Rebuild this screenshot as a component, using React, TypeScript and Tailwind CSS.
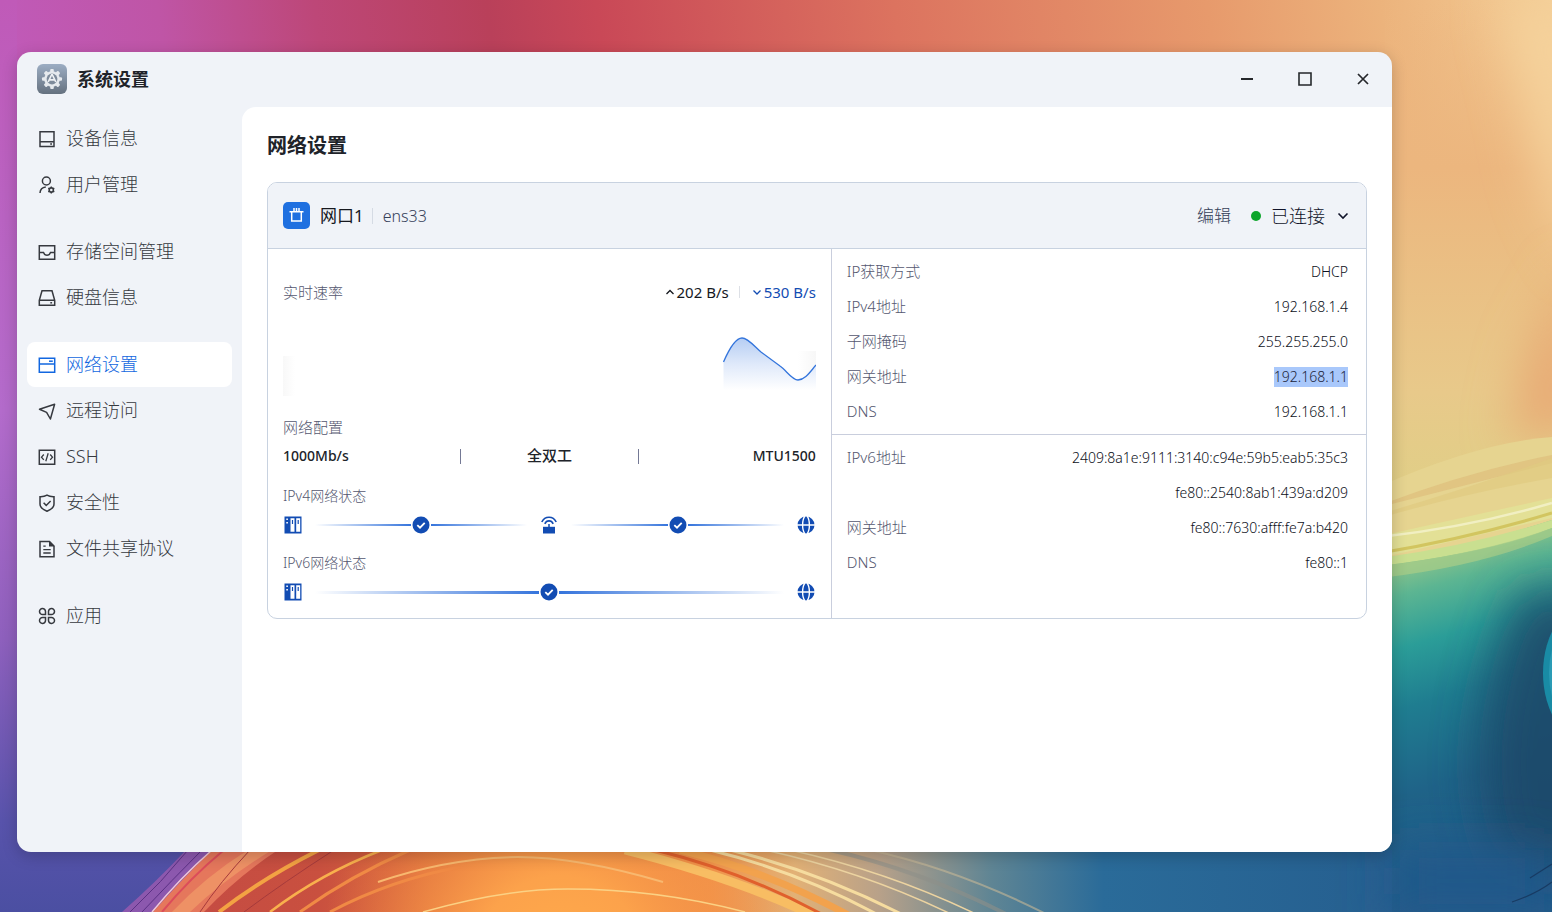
import type { ReactNode } from "react"

const Icon = ({ children }: { children: ReactNode }) => (
  <svg className="size-[18px] shrink-0" viewBox="0 0 18 18" fill="none" stroke="currentColor" strokeWidth="1.5" aria-hidden="true">
    {children}
  </svg>
)

const groups: { label: string; active?: boolean; icon: ReactNode }[][] = [
  [
    { label: "设备信息", icon: <><path d="M2 1.8h14v14.6H2zM2 11.8h14" /><path d="M12.2 14.1h1.8" /></> },
    { label: "用户管理", icon: <><circle cx="8.4" cy="5" r="4" /><path d="M2 17c.2-3.600 2.200-5.500 5.800-5.900" /><circle cx="13.300" cy="14" r="2.100" strokeWidth="1.600" /><path d="M13.300 10.500v1.400M13.300 16.100v1.400M10.300 12.200l1.200.7M15.100 15.100l1.200.7M10.300 15.800l1.200-.7M15.100 12.900l1.200-.7" strokeWidth="1.400" /></> },
  ],
  [
    { label: "存储空间管理", icon: <path d="M1.300 2.800h15.400v13.400H1.300zM1.300 9.500h4.200c.6 1.900 1.700 2.800 3.500 2.800s2.900-.9 3.500-2.800h4.200" /> },
    { label: "硬盘信息", icon: <><path d="M4 1.800h10l2.700 9.500v5H1.300v-5zM1.300 11.300h15.400" /><path d="M12.300 13.800h1.800" /></> },
  ],
  [
    { label: "网络设置", active: true, icon: <><path d="M1.300 2.300h15.400v14H1.300zM1.300 8h15.400" /><path d="M11 5.200h3.800" /></> },
    { label: "远程访问", icon: <path d="M1.500 7.300 16.600 2.200 12.400 17 8.600 10.400z" strokeLinejoin="round" /> },
    { label: "SSH", icon: <><path d="M1.300 2.300h15.400v14H1.300z" /><path d="M5.800 6.500 3.500 9.200l2.300 2.700M12.200 6.500l2.300 2.700-2.300 2.700M10.200 5.300 7.800 13.200" strokeWidth="1.300" /></> },
    { label: "安全性", icon: <><path d="M9 1.200c2.200 1.300 4.600 1.600 7 1.500v7.300c0 3.500-2.800 5.500-7 7.200-4.200-1.700-7-3.700-7-7.200V2.700c2.400.1 4.800-.2 7-1.500z" /><path d="m5.600 8.800 2.600 2.600 4.400-4.500" /></> },
    { label: "文件共享协议", icon: <><path d="M2 1.500h9.500L16 6v10.700H2z" /><path d="M11 1v5.500h5.500z" fill="currentColor" stroke="none" /><path d="M5.300 6.200h2.400M5.300 9.700h7.400M5.300 13h7.400" strokeWidth="1.300" /></> },
  ],
  [
    { label: "应用", icon: <path d="M7.500 7.500H4.700a3 3 0 1 1 2.800-3zM10.500 7.500h2.800a3 3 0 1 0-2.800-3zM7.500 10.500H4.700a3 3 0 1 0 2.800 3zM10.500 10.500h2.800a3 3 0 1 1-2.800 3z" /> },
  ],
]

const ipv4Rows = [
  { label: "IP获取方式", value: "DHCP" },
  { label: "IPv4地址", value: "192.168.1.4" },
  { label: "子网掩码", value: "255.255.255.0" },
  { label: "网关地址", value: "192.168.1.1", selected: true },
  { label: "DNS", value: "192.168.1.1" },
]

const ipv6Rows = [
  { label: "IPv6地址", value: "2409:8a1e:9111:3140:c94e:59b5:eab5:35c3" },
  { label: "", value: "fe80::2540:8ab1:439a:d209" },
  { label: "网关地址", value: "fe80::7630:afff:fe7a:b420" },
  { label: "DNS", value: "fe80::1" },
]

const Wallpaper = () => (
  <svg className="absolute inset-0 -z-10 size-full" viewBox="0 0 1552 912" preserveAspectRatio="none" aria-hidden="true">
    <defs>
      <linearGradient id="top" x1="0" x2="1552" y1="0" y2="0" gradientUnits="userSpaceOnUse" gradientTransform="rotate(-8)">
        <stop offset="0" stopColor="#c05ab8" />
        <stop offset=".1" stopColor="#bf55a6" />
        <stop offset=".2" stopColor="#bd4778" />
        <stop offset=".31" stopColor="#b9405a" />
        <stop offset=".38" stopColor="#c94857" />
        <stop offset=".57" stopColor="#dc735f" />
        <stop offset=".77" stopColor="#e79a6c" />
        <stop offset=".88" stopColor="#ecb37c" />
        <stop offset="1" stopColor="#f4cf98" />
      </linearGradient>
      <linearGradient id="left" x1="0" x2="0" y1="0" y2="912" gradientUnits="userSpaceOnUse">
        <stop offset="0" stopColor="#c05ab8" />
        <stop offset=".45" stopColor="#b36bcb" />
        <stop offset=".7" stopColor="#8e60bd" />
        <stop offset=".9" stopColor="#5853ab" />
        <stop offset="1" stopColor="#4b4fa2" />
      </linearGradient>
      <linearGradient id="sand" x1="0" x2="0" y1="0" y2="560" gradientUnits="userSpaceOnUse">
        <stop offset="0" stopColor="#ecb780" stopOpacity="0" />
        <stop offset=".3" stopColor="#ecb67e" />
        <stop offset=".7" stopColor="#e8c98a" />
        <stop offset="1" stopColor="#dbd384" />
      </linearGradient>
      <linearGradient id="sea" x1="1400" x2="1500" y1="550" y2="900" gradientUnits="userSpaceOnUse">
        <stop offset="0" stopColor="#a2cb88" />
        <stop offset=".12" stopColor="#5cb592" />
        <stop offset=".26" stopColor="#2b9d98" />
        <stop offset=".42" stopColor="#1f7d90" />
        <stop offset=".65" stopColor="#1f6388" />
        <stop offset="1" stopColor="#235a8a" />
      </linearGradient>
      <linearGradient id="fire" x1="150" x2="1552" y1="0" y2="0" gradientUnits="userSpaceOnUse">
        <stop offset="0" stopColor="#c34a44" />
        <stop offset=".12" stopColor="#c9503f" />
        <stop offset=".2" stopColor="#db6a3c" />
        <stop offset=".32" stopColor="#ea7f42" />
        <stop offset=".4" stopColor="#f0934a" />
        <stop offset=".46" stopColor="#e2b176" />
        <stop offset=".52" stopColor="#b8a189" />
        <stop offset=".6" stopColor="#5f8594" />
        <stop offset=".68" stopColor="#2a6b99" />
        <stop offset="1" stopColor="#23588a" />
      </linearGradient>
      <radialGradient id="glow" cx="560" cy="960" r="240" gradientUnits="userSpaceOnUse">
        <stop offset="0" stopColor="#ffab4b" />
        <stop offset=".35" stopColor="#fca24b" />
        <stop offset="1" stopColor="#f08644" stopOpacity="0" />
      </radialGradient>
      <filter id="soft" x="-100%" y="-100%" width="300%" height="300%"><feGaussianBlur stdDeviation="24" /></filter>
    </defs>
    <rect width="1552" height="912" fill="url(#top)" />
    <rect width="17" height="912" fill="url(#left)" />
    <rect x="17" y="820" width="200" height="92" fill="url(#left)" />
    <path d="M1385 0h167v600h-167z" fill="url(#sand)" />
    <path d="M1500 0h90v270q-50-60-60-140z" fill="#f5d29b" filter="url(#soft)" />
    <path d="M1580 260v170l-70 10 20-90z" fill="#e8a873" filter="url(#soft)" />
    {/* right hand waves */}
    <path d="M1380 486q100-44 172-49v90l-172 50z" fill="#e6d490" />
    <path d="M1380 505q90-34 172-50v8l-172 44z" fill="#dcb574" opacity=".5" />
    <path d="M1380 514q90-26 172-56v20q-90 16-172 40z" fill="#dfca80" opacity=".7" />
    <path d="M1380 536q90-20 172-38v20l-172 40z" fill="#e3e096" />
    <path d="M1380 537q90-10 172-34" stroke="#f1efc2" strokeWidth="2.500" fill="none" />
    <path d="M1380 553q90-15 172-40" stroke="#d2c560" strokeWidth="3" fill="none" />
    <path d="M1380 562q90-15 172-42v392h-172z" fill="url(#sea)" />
    <path d="M1380 558q90-12 172-38v8q-60 24-172 38z" fill="#c9df90" />
    <path d="M1380 566q100-12 172-38v8q-70 30-172 42z" fill="#a9cd88" opacity=".7" />
    <path d="M1520 590h100v280h-120q-50-120 20-280z" fill="#1c4668" filter="url(#soft)" opacity=".85" />
    <ellipse cx="1592" cy="673" rx="49" ry="72" fill="#198ba5" />
    <ellipse cx="1594" cy="673" rx="45" ry="66" fill="#2a9bb5" />
    {/* bottom band */}
    <path d="M153 912q28-34 59-62h1180v62z" fill="url(#fire)" />
    <path d="M1392 850h160v62h-160z" fill="#23588a" filter="url(#soft)" />
    <path d="M270 912q50-40 112-62h280l140 62z" fill="url(#glow)" />
    <path d="M122 912q34-30 64-62h28q-32 30-61 62z" fill="#8c58ae" />
    <path d="M153 912q28-32 59-62h66q-40 26-74 62z" fill="#e5775c" />
    <path d="M172 912q34-36 76-62h24q-46 28-82 62z" fill="#ee9165" />
    <g fill="none">
      <path d="M130 912q32-30 58-62M142 912q30-32 60-62" stroke="#5b3185" />
      <path d="M152 912q28-34 60-62" stroke="#f1c9d7" strokeWidth="1.500" />
      <path d="M162 912q28-34 62-62" stroke="#dc4c5a" strokeWidth="2" />
      <path d="M219 912q44-34 100-62" stroke="#f3a243" strokeWidth="4" />
      <path d="M200 912q20-30 50-62M244 912q40-30 90-62" stroke="#a63a3b" />
      <path d="M270 912q50-38 112-62" stroke="#f9b04d" strokeWidth="2.500" />
      <path d="M300 912q50-36 110-62M330 912q60-32 130-45" stroke="#f08a45" strokeWidth="3" />
      <path d="M378 882q70-24 140-25 60 0 145 25" stroke="#f8b86f" strokeWidth="2" />
      <path d="M423 912q80-23 145-23 90 0 177 23" stroke="#fbd184" strokeWidth="1.500" />
      <path d="M625 850q110 28 190 66" stroke="#f8bd63" strokeWidth="9" />
      <path d="M655 850q90 22 170 66" stroke="#e0602c" strokeWidth="3" />
      <path d="M680 850q90 22 170 66" stroke="#f2a24d" strokeWidth="7" />
      <path d="M710 850q90 22 170 66M730 850q90 22 175 66" stroke="#f6dc9f" strokeWidth="3" />
      <path d="M765 850q100 22 190 66M790 850q100 22 190 66" stroke="#ecd3a0" strokeWidth="1.500" />
      <path d="M830 850q90 20 180 66" stroke="#8d8f88" strokeWidth="4" opacity=".6" />
      <path d="M870 850q90 20 180 66" stroke="#c7b796" strokeWidth="2" opacity=".6" />
      <path d="M1512 902q24-8 40-20M1530 878l22-14" stroke="#183b63" strokeWidth="1.200" />
    </g>
  </svg>
)

const AppLogo = () => (
  <svg className="size-[30px]" viewBox="0 0 30 30" aria-hidden="true">
    <defs>
      <linearGradient id="logo" x1="0" x2="0" y1="0" y2="1">
        <stop offset="0" stopColor="#9cadc3" />
        <stop offset="1" stopColor="#65717f" />
      </linearGradient>
    </defs>
    <rect width="30" height="30" rx="6" fill="url(#logo)" />
    <g fill="#e6eaee">
      {[0, 45, 90, 135].map((angle) => (
        <rect key={angle} x="13.200" y="5" width="3.600" height="20" rx="1" transform={`rotate(${angle} 15 15)`} />
      ))}
      <circle cx="15" cy="15" r="7.800" />
    </g>
    <circle cx="15" cy="15" r="5.400" fill="#7e8b9b" />
    <path d="m15 10-3.800 8M15 10l3.800 8M12.500 15.800h5" stroke="#edf0f3" strokeWidth="1.700" fill="none" />
  </svg>
)

const DeviceIcon = () => (
  <svg className="size-5 shrink-0" viewBox="0 0 20 20" aria-hidden="true">
    <path d="M1.500 1.500h17v17h-17z" fill="#124cb3" />
    <path d="M7.500 3.200h4v13.600h-4zM13.200 3.200h4v13.600h-4z" fill="#fff" />
    <path d="M9.500 5v4M15.200 5v4" stroke="#124cb3" strokeWidth="1.200" />
    <path d="M3.300 3.500h1.600v1.500H3.300zM3.300 7h1.600v1.500H3.300z" fill="#fff" />
  </svg>
)

const RouterIcon = () => (
  <svg className="size-5 shrink-0" viewBox="0 0 20 20" fill="none" stroke="#124cb3" aria-hidden="true">
    <path d="M4 11.800h12v6.700H4z" fill="#124cb3" stroke="none" />
    <path d="M10 9v3" strokeWidth="1.500" />
    <path d="M2.800 7c3-6.300 11.400-6.300 14.400 0M5.800 8.800c1.800-3.900 6.600-3.900 8.400 0" strokeWidth="1.600" />
  </svg>
)

const GlobeIcon = () => (
  <svg className="size-5 shrink-0" viewBox="0 0 20 20" aria-hidden="true">
    <circle cx="10" cy="10" r="8.500" fill="#124cb3" />
    <path d="M9 1C5.800 5 5.800 15 9 19M11 1c3.200 4 3.200 14 0 18M1 10h18" fill="none" stroke="#fff" strokeWidth="1.400" />
  </svg>
)

const CheckIcon = () => (
  <svg className="size-[18px] shrink-0" viewBox="0 0 18 18" aria-hidden="true">
    <circle cx="9" cy="9" r="8.500" fill="#124cb3" />
    <path d="m5.300 9.100 2.700 2.600 4.700-4.900" fill="none" stroke="#fff" strokeWidth="1.800" />
  </svg>
)

const Link = ({ thick }: { thick?: boolean }) => (
  <div className="flex flex-1 items-center gap-px px-3">
    <div className={thick ? "h-[3px] flex-1 bg-linear-to-r from-transparent to-[#3574dc]" : "h-0.5 flex-1 bg-linear-to-r from-transparent to-[#3574dc]"} />
    <CheckIcon />
    <div className={thick ? "h-[3px] flex-1 bg-linear-to-l from-transparent to-[#3574dc]" : "h-0.5 flex-1 bg-linear-to-l from-transparent to-[#3574dc]"} />
  </div>
)

const Rows = ({ rows }: { rows: { label: string; value: string; selected?: boolean }[] }) => (
  <dl>
    {rows.map((row, i) => (
      <div key={i} className="flex h-[35px] items-center justify-between">
        <dt className="text-[15px] text-[#54576f]">{row.label}</dt>
        <dd className={row.selected ? "bg-[#a9c8fb] text-sm/5 text-[#20243a]" : "text-sm/5 text-[#0c0f20]"}>{row.value}</dd>
      </div>
    ))}
  </dl>
)

const RateChart = () => (
  <div className="mt-5 flex h-[72px] items-end justify-between">
    <div className="h-10 w-3 bg-linear-to-r from-[#f8f8f8] to-white" />
    <svg className="h-[72px] w-[93px]" viewBox="0 0 93 72" role="img" aria-label="实时速率">
      <defs>
        <linearGradient id="area" x1="0" x2="0" y1="14" y2="66" gradientUnits="userSpaceOnUse">
          <stop offset="0" stopColor="#b5cdf3" />
          <stop offset=".5" stopColor="#dfe9fa" />
          <stop offset="1" stopColor="#fff" />
        </linearGradient>
        <linearGradient id="edge">
          <stop offset="0" stopColor="#f7f7f7" stopOpacity="0" />
          <stop offset="1" stopColor="#f7f7f7" />
        </linearGradient>
      </defs>
      <rect x="75" y="27" width="18" height="39" fill="url(#edge)" />
      <path d="M.5 38C7 23 13 14 19 14s13 9 19 14l19 14c6 4 12 14 18 14 7 0 12-8 18-15v25H.5z" fill="url(#area)" />
      <path d="M.5 38C7 23 13 14 19 14s13 9 19 14l19 14c6 4 12 14 18 14 7 0 12-8 18-15" fill="none" stroke="#3475dc" strokeWidth="1.300" />
    </svg>
  </div>
)

const Sidebar = () => (
  <nav className="flex w-[225px] shrink-0 flex-col gap-[22px] px-2.5 pt-[9px]">
    {groups.map((group, i) => (
      <ul key={i} className="flex flex-col gap-px">
        {group.map((item) => (
          <li key={item.label}>
            <a
              href="#"
              className={
                item.active
                  ? "flex h-[45px] items-center gap-2.5 rounded-lg bg-white px-[11px] text-lg font-light text-[#1267e0]"
                  : "flex h-[45px] items-center gap-2.5 rounded-lg px-[11px] text-lg font-light text-[#36393f]"
              }
            >
              <Icon>{item.icon}</Icon>
              <span className="pb-0.5">{item.label}</span>
            </a>
          </li>
        ))}
      </ul>
    ))}
  </nav>
)

const TitleBar = () => (
  <header className="flex h-[55px] shrink-0 items-center justify-between pb-0.5 pl-5">
    <div className="flex items-center gap-2.5">
      <AppLogo />
      <span className="text-lg font-bold text-[#202329]">系统设置</span>
    </div>
    <div className="flex text-[#25272b]">
      <button type="button" aria-label="最小化" className="flex h-10 w-[58px] items-center justify-center">
        <svg className="size-4" viewBox="0 0 16 16" stroke="currentColor" strokeWidth="2"><path d="M2 8h12" /></svg>
      </button>
      <button type="button" aria-label="最大化" className="flex h-10 w-[58px] items-center justify-center">
        <svg className="size-4" viewBox="0 0 16 16" fill="none" stroke="currentColor" strokeWidth="1.600"><path d="M2 2h12v12H2z" /></svg>
      </button>
      <button type="button" aria-label="关闭" className="flex h-10 w-[58px] items-center justify-center">
        <svg className="size-4" viewBox="0 0 16 16" fill="none" stroke="currentColor" strokeWidth="1.700"><path d="m3 3 10 10M13 3 3 13" /></svg>
      </button>
    </div>
  </header>
)

const NetworkCard = () => (
  <section className="overflow-hidden rounded-[10px] border border-[#c8d2e0] bg-white">
    <div className="flex h-[66px] items-center justify-between border-b border-[#c8d2e0] bg-[#f0f3f8] px-[15px]">
      <div className="flex items-center">
        <svg className="size-[27px]" viewBox="0 0 27 27" fill="none" stroke="#fff" strokeWidth="1.500" aria-hidden="true">
          <rect width="27" height="27" rx="5" fill="#1f70e0" stroke="none" />
          <path d="M6.500 9.800h14M8.700 9.800v9.200h9.600v-9.200M11 9.800V6M13.500 9.800V6M16 9.800V6" />
        </svg>
        <h2 className="ml-2.5 text-[17px] text-[#17191f]">网口1</h2>
        <span className="mr-2.5 ml-2 h-4 w-px bg-[#d5dbe4]" />
        <span className="text-base font-light text-[#36415a]">ens33</span>
      </div>
      <div className="flex items-center">
        <button type="button" className="text-[17px] font-light text-[#36415a]">编辑</button>
        <span className="ml-5 size-2.5 rounded-full bg-[#0da52b]" />
        <button type="button" className="ml-2.5 flex items-center gap-2.5 text-lg font-light text-[#11142a]">
          已连接
          <svg className="size-4" viewBox="0 0 16 16" fill="none" stroke="currentColor" strokeWidth="1.600" aria-hidden="true"><path d="m3.500 5.500 4.500 4.500 4.500-4.500" /></svg>
        </button>
      </div>
    </div>

    <div className="grid grid-cols-[19fr_18fr]">
      <div className="border-r border-[#c9cedd] px-[15px] pt-[31px] pb-4">
        <div className="flex h-6 items-center justify-between">
          <h3 className="text-[15px] font-light text-[#54576f]">实时速率</h3>
          <div className="flex items-center text-[15px]">
            <span className="flex items-center gap-0.5 text-[#15181e]">
              <svg className="size-2.5" viewBox="0 0 10 10" fill="none" stroke="currentColor" strokeWidth="1.300"><path d="M1.500 7 5 3.500 8.500 7" /></svg>
              202 B/s
            </span>
            <span className="mr-3 ml-2.5 h-3 w-px bg-[#dde0e6]" />
            <span className="flex items-center gap-0.5 text-[#124cb3]">
              <svg className="size-2.5" viewBox="0 0 10 10" fill="none" stroke="currentColor" strokeWidth="1.300"><path d="M1.500 3.500 5 7l3.500-3.500" /></svg>
              530 B/s
            </span>
          </div>
        </div>
        <RateChart />

        <h3 className="mt-[19px] text-[15px]/6 font-light text-[#54576f]">网络配置</h3>
        <div className="mt-[5px] flex h-6 items-center text-sm font-medium text-[#202329]">
          <span className="flex-1">1000Mb/s</span>
          <span className="h-[15px] w-px bg-[#747995]" />
          <span className="flex-1 text-center text-[15px]">全双工</span>
          <span className="h-[15px] w-px bg-[#747995]" />
          <span className="flex-1 text-right">MTU1500</span>
        </div>

        <h3 className="mt-[18px] text-sm/5 font-light text-[#54576f]">IPv4网络状态</h3>
        <div className="mt-[9px] flex items-center">
          <DeviceIcon />
          <Link />
          <RouterIcon />
          <Link />
          <GlobeIcon />
        </div>

        <h3 className="mt-[18px] text-sm/5 font-light text-[#54576f]">IPv6网络状态</h3>
        <div className="mt-[9px] flex items-center">
          <DeviceIcon />
          <Link thick />
          <GlobeIcon />
        </div>
      </div>

      <div className="font-light">
        <div className="border-b border-[#c9cedd] py-[5px] pr-[18px] pl-[15px]">
          <Rows rows={ipv4Rows} />
        </div>
        <div className="py-[5px] pr-[18px] pl-[15px]">
          <Rows rows={ipv6Rows} />
        </div>
      </div>
    </div>
  </section>
)

const App = () => {
  return (
    <div className="relative isolate h-screen overflow-hidden pt-[52px] pr-40 pb-[60px] pl-[17px] font-['Noto_Sans','Noto_Sans_CJK_SC',sans-serif]">
      <Wallpaper />
      <div className="flex h-full flex-col overflow-hidden rounded-[14px] bg-[#f0f3f8] shadow-[0_4px_16px_rgba(0,0,0,0.2)]">
        <TitleBar />
        <div className="flex min-h-0 flex-1">
          <Sidebar />
          <main className="min-w-0 flex-1 overflow-auto rounded-tl-[14px] bg-white px-[25px] pt-[25px]">
            <h1 className="mb-[22px] text-xl font-bold text-[#202329]">网络设置</h1>
            <NetworkCard />
          </main>
        </div>
      </div>
    </div>
  )
}

export default App
